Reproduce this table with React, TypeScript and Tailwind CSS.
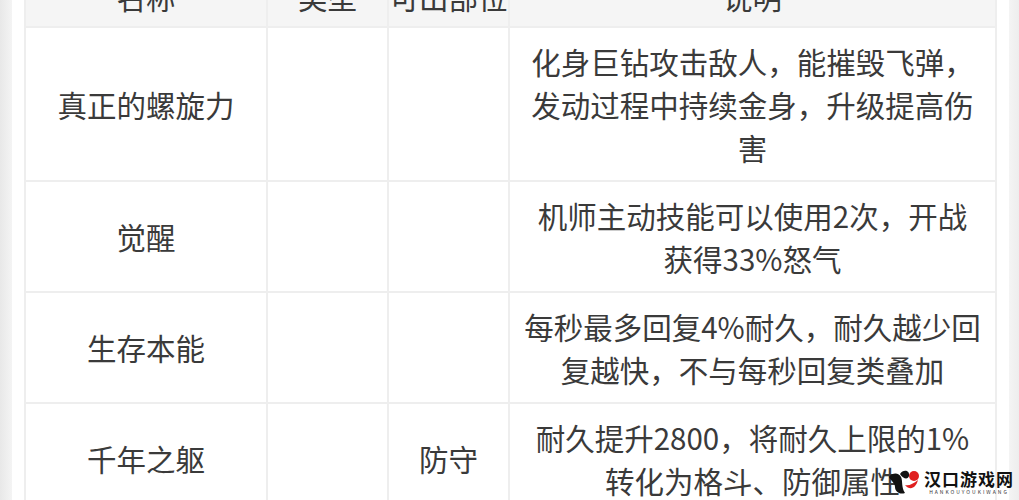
const rows = [
  {
    name: '真正的螺旋力',
    part: '',
    desc: ['化身巨钻攻击敌人，能摧毁飞弹，', '发动过程中持续金身，升级提高伤', '害'],
  },
  {
    name: '觉醒',
    part: '',
    desc: ['机师主动技能可以使用2次，开战', '获得33%怒气'],
  },
  {
    name: '生存本能',
    part: '',
    desc: ['每秒最多回复4%耐久，耐久越少回', '复越快，不与每秒回复类叠加'],
  },
  {
    name: '千年之躯',
    part: '防守',
    desc: ['耐久提升2800，将耐久上限的1%', '转化为格斗、防御属性'],
  },
]

function Watermark() {
  return (
    <div className="absolute bottom-[4px] right-[5px] flex items-center gap-[2px]">
      <svg width="34" height="28" viewBox="0 0 34 28">
        <path d="M1 9 C5 4 11 5 13 9 C15 13 13 19 17 25 C11 27 7 23 7 19 C7 15 3 13 1 9 Z" fill="#111" />
        <path d="M12 6 C15 1 22 2 21 8 C20 12 15 11 12 6 Z" fill="#111" />
        <circle cx="26" cy="8" r="5" fill="#e02020" />
        <path d="M17 17 C21 18 25 16 30 12 C28 20 22 23 17 17 Z" fill="#e02020" />
      </svg>
      <div className="flex flex-col items-center leading-none">
        <span className="text-[17px] font-bold tracking-[1px] text-[#111]">汉口游戏网</span>
        <span className="mt-[2px] text-[5px] tracking-[2px] text-[#333]">HANKOUYOUKIWANG</span>
      </div>
    </div>
  )
}

export default function App() {
  return (
    <div
      className="relative h-[500px] w-[1019px] overflow-hidden bg-white text-[#3a3a3a]"
      style={{ fontFamily: '"Noto Sans CJK SC", "Noto Sans", sans-serif' }}
    >
      <div className="flex h-full">
        <div className="w-[12px] shrink-0 bg-gradient-to-r from-[#e8e8e8] to-[#f4f4f4]" />
        <div className="flex-1 px-[12px]">
          <table className="-mt-[36px] w-[971px] table-fixed border-collapse text-[29.5px] leading-[43px]">
            <colgroup>
              <col className="w-[242px]" />
              <col className="w-[121px]" />
              <col className="w-[121px]" />
              <col className="w-[487px]" />
            </colgroup>
            <thead>
              <tr className="h-[62px] bg-[#f5f5f5]">
                <th className="border-2 border-[#eeeeee] font-normal">名称</th>
                <th className="border-2 border-[#eeeeee] font-normal">类型</th>
                <th className="whitespace-nowrap border-2 border-[#eeeeee] font-normal">可出部位</th>
                <th className="border-2 border-[#eeeeee] font-normal">说明</th>
              </tr>
            </thead>
            <tbody>
              {rows.map((r) => (
                <tr key={r.name}>
                  <td className="border-2 border-[#eeeeee] text-center">{r.name}</td>
                  <td className="border-2 border-[#eeeeee] text-center" />
                  <td className="border-2 border-[#eeeeee] text-center">{r.part}</td>
                  <td className="whitespace-nowrap border-2 border-[#eeeeee] px-[8px] py-[11.5px] text-center">
                    {r.desc.map((line) => (
                      <div key={line}>{line}</div>
                    ))}
                  </td>
                </tr>
              ))}
            </tbody>
          </table>
        </div>
        <div className="w-[12px] shrink-0 bg-gradient-to-r from-[#f4f4f4] to-[#ececec]" />
      </div>
      <Watermark />
    </div>
  )
}
